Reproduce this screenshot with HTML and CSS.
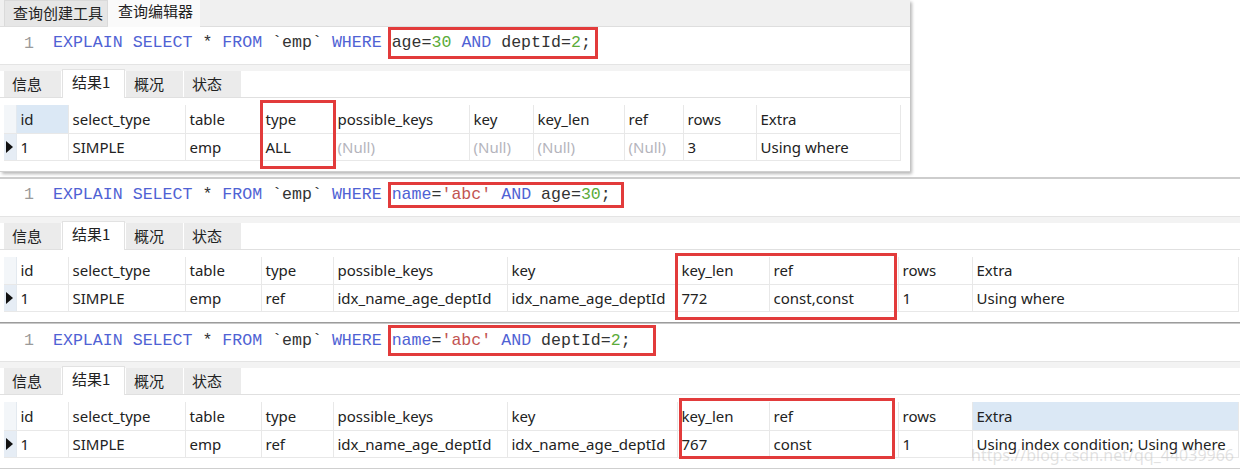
FILE: index.html
```html
<!DOCTYPE html>
<html lang="zh-CN">
<head>
<meta charset="utf-8">
<title>EXPLAIN</title>
<link rel="stylesheet" href="styles.css">
</head>
<body>
<div class="page">

  <section class="panel panel-first">
    <div class="doc-tabs">
      <span class="doc-tab">查询创建工具</span>
      <span class="doc-tab active">查询编辑器</span>
    </div>
    <div class="editor">
      <span class="ln">1</span>
      <code class="sql"><span class="kw">EXPLAIN</span> <span class="kw">SELECT</span> * <span class="kw">FROM</span> `emp` <span class="kw">WHERE</span> <span class="hl hl-1">age=<span class="num">30</span> <span class="kw">AND</span> deptId=<span class="num">2</span>;</span></code>
    </div>
    <div class="sep"></div>
    <div class="res-tabs">
      <span class="res-tab">信息</span>
      <span class="res-tab active">结果1</span>
      <span class="res-tab">概况</span>
      <span class="res-tab">状态</span>
    </div>
    <div class="grid-wrap">
      <table class="grid grid-narrow">
        <colgroup>
          <col class="c-ind"><col class="c-id"><col class="c-st"><col class="c-tb"><col class="c-ty">
          <col class="c-pk"><col class="c-k"><col class="c-kl"><col class="c-ref"><col class="c-rows"><col class="c-ex">
        </colgroup>
        <tr class="head">
          <th class="ind"></th><th class="sel">id</th><th>select_type</th><th>table</th><th>type</th>
          <th>possible_keys</th><th>key</th><th>key_len</th><th>ref</th><th>rows</th><th>Extra</th>
        </tr>
        <tr>
          <td class="ind"><span class="arrow"></span></td><td>1</td><td>SIMPLE</td><td>emp</td><td>ALL</td>
          <td class="null">(Null)</td><td class="null">(Null)</td><td class="null">(Null)</td><td class="null">(Null)</td><td>3</td><td>Using where</td>
        </tr>
      </table>
      <div class="mark mark-type"></div>
    </div>
  </section>

  <section class="panel panel-second">
    <div class="editor">
      <span class="ln">1</span>
      <code class="sql"><span class="kw">EXPLAIN</span> <span class="kw">SELECT</span> * <span class="kw">FROM</span> `emp` <span class="kw">WHERE</span> <span class="hl hl-2"><span class="kw">name</span>=<span class="str">'abc'</span> <span class="kw">AND</span> age=<span class="num">30</span>;</span></code>
    </div>
    <div class="sep"></div>
    <div class="res-tabs">
      <span class="res-tab">信息</span>
      <span class="res-tab active">结果1</span>
      <span class="res-tab">概况</span>
      <span class="res-tab">状态</span>
    </div>
    <div class="grid-wrap">
      <table class="grid grid-wide">
        <colgroup>
          <col class="c-ind"><col class="c-id"><col class="c-st"><col class="c-tb"><col class="c-ty">
          <col class="w-pk"><col class="w-k"><col class="w-kl"><col class="w-ref"><col class="w-rows"><col class="w-ex">
        </colgroup>
        <tr class="head">
          <th class="ind"></th><th>id</th><th>select_type</th><th>table</th><th>type</th>
          <th>possible_keys</th><th>key</th><th>key_len</th><th>ref</th><th>rows</th><th>Extra</th>
        </tr>
        <tr>
          <td class="ind"><span class="arrow"></span></td><td>1</td><td>SIMPLE</td><td>emp</td><td>ref</td>
          <td>idx_name_age_deptId</td><td>idx_name_age_deptId</td><td>772</td><td>const,const</td><td>1</td><td>Using where</td>
        </tr>
      </table>
      <div class="mark mark-keys-2"></div>
    </div>
  </section>

  <section class="panel panel-third">
    <div class="editor">
      <span class="ln">1</span>
      <code class="sql"><span class="kw">EXPLAIN</span> <span class="kw">SELECT</span> * <span class="kw">FROM</span> `emp` <span class="kw">WHERE</span> <span class="hl hl-3"><span class="kw">name</span>=<span class="str">'abc'</span> <span class="kw">AND</span> deptId=<span class="num">2</span>;</span></code>
    </div>
    <div class="sep"></div>
    <div class="res-tabs">
      <span class="res-tab">信息</span>
      <span class="res-tab active">结果1</span>
      <span class="res-tab">概况</span>
      <span class="res-tab">状态</span>
    </div>
    <div class="grid-wrap">
      <table class="grid grid-wide">
        <colgroup>
          <col class="c-ind"><col class="c-id"><col class="c-st"><col class="c-tb"><col class="c-ty">
          <col class="w-pk"><col class="w-k"><col class="w-kl"><col class="w-ref"><col class="w-rows"><col class="w-ex">
        </colgroup>
        <tr class="head">
          <th class="ind"></th><th>id</th><th>select_type</th><th>table</th><th>type</th>
          <th>possible_keys</th><th>key</th><th>key_len</th><th>ref</th><th>rows</th><th class="sel">Extra</th>
        </tr>
        <tr>
          <td class="ind"><span class="arrow"></span></td><td>1</td><td>SIMPLE</td><td>emp</td><td>ref</td>
          <td>idx_name_age_deptId</td><td>idx_name_age_deptId</td><td>767</td><td>const</td><td>1</td><td>Using index condition; Using where</td>
        </tr>
      </table>
      <div class="mark mark-keys-3"></div>
    </div>
    <div class="watermark">https://blog.csdn.net/qq_44039966</div>
  </section>

</div>
</body>
</html>
```

FILE: styles.css
```css
* { box-sizing: border-box; }

html, body {
  margin: 0;
  padding: 0;
  background: #ffffff;
}

body {
  font-family: "Noto Sans", "Noto Sans CJK SC", sans-serif;
  font-size: 15px;
  color: #222222;
  width: 1240px;
  height: 472px;
  overflow: hidden;
}

.page {
  display: flex;
  flex-direction: column;
  align-items: flex-start;
}

.panel {
  position: relative;
  background: #ffffff;
}

.panel-first {
  width: 910px;
  border-bottom: 1px solid #d0d0d0;
  box-shadow: 2px 2px 3px rgba(0, 0, 0, 0.28);
  z-index: 2;
}

.panel-second {
  width: 1240px;
  margin-top: 5px;
  border-top: 2px solid #cdcdcd;
  border-bottom: 1px solid #9c9c9c;
}

.panel-third {
  width: 1240px;
  border-top: 1px solid #c8c8c8;
  border-bottom: 1px solid #cfcfcf;
}

/* top document tabs */
.doc-tabs {
  height: 27px;
  background: #f0f0f0;
  border-bottom: 1px solid #dedede;
  display: flex;
  align-items: flex-end;
  padding-left: 4px;
}

.doc-tab {
  height: 26px;
  line-height: 24px;
  padding: 0 0 0 8px;
  font-family: "Noto Sans CJK SC", sans-serif;
  font-size: 15px;
  color: #222;
  white-space: nowrap;
}

.doc-tab:first-child {
  width: 104px;
  background: #e6e6e6;
  border: 1px solid #dadada;
  border-bottom: none;
}

.doc-tab.active {
  width: 92px;
  height: 27px;
  background: #fafafa;
  line-height: 21px;
  padding-left: 10px;
  margin-bottom: -1px;
}

/* sql editor */
.editor {
  height: 37px;
  padding-bottom: 5px;
  display: flex;
  align-items: center;
  background: #ffffff;
  font-family: "Liberation Mono", "Courier New", monospace;
  font-size: 16.6px;
  color: #333333;
  white-space: pre;
}

.ln {
  width: 34px;
  text-align: right;
  margin-right: 19px;
  color: #9a9a9a;
}

.sql {
  font-family: inherit;
  font-size: inherit;
  color: #333333;
}

.kw { color: #4f62d4; }
.num { color: #5bab3a; }
.str { color: #c25452; }

.hl {
  display: inline-block;
  border: 3px solid #e23b3b;
  margin-left: -4px;
  padding-left: 1px;
}

.hl-1 { line-height: 26px; padding-right: 4px; }
.hl-2 { line-height: 20px; padding-right: 10px; }
.hl-3 { line-height: 25px; padding-right: 22px; }

.sep {
  height: 7px;
  background: #f3f3f3;
  border-top: 1px solid #e4e4e4;
}

/* result tabs */
.res-tabs {
  height: 27px;
  display: flex;
  align-items: flex-end;
  gap: 1px;
  padding-left: 4px;
  background: #ffffff;
  border-bottom: 1px solid #e0e0e0;
}

.res-tab {
  width: 57px;
  height: 26px;
  line-height: 26px;
  padding-left: 8px;
  background: #ebebeb;
  font-family: "Noto Sans CJK SC", sans-serif;
  font-size: 15px;
  color: #222;
  white-space: nowrap;
}

.res-tab.active {
  width: 63px;
  height: 29px;
  line-height: 24px;
  padding-left: 9px;
  background: #ffffff;
  border: 1px solid #e2e2e2;
  border-bottom: none;
  margin-bottom: -1px;
}

/* grid */
.grid-wrap {
  position: relative;
  margin-top: 7px;
  padding-left: 4px;
  padding-bottom: 10px;
}

.grid {
  border-collapse: collapse;
  table-layout: fixed;
}

.grid-narrow { width: 896px; }
.grid-wide { width: 1234px; }

.c-ind { width: 12px; }
.c-id { width: 52px; }
.c-st { width: 117px; }
.c-tb { width: 76px; }
.c-ty { width: 72px; }
.c-pk { width: 136px; }
.c-k { width: 64px; }
.c-kl { width: 91px; }
.c-ref { width: 59px; }
.c-rows { width: 73px; }
.c-ex { width: 144px; }

.w-pk { width: 174px; }
.w-k { width: 170px; }
.w-kl { width: 92px; }
.w-ref { width: 129px; }
.w-rows { width: 74px; }
.w-ex { width: 266px; }

.grid th,
.grid td {
  padding: 0 0 0 4px;
  text-align: left;
  font-weight: normal;
  white-space: nowrap;
  overflow: hidden;
  border-right: 1px solid #e8e8e8;
  border-bottom: 1px solid #e8e8e8;
  color: #222222;
}

.grid th {
  height: 28px;
  line-height: 26px;
}

.grid td {
  height: 27px;
  line-height: 26px;
}

.grid .ind {
  padding: 0;
  background: #f3f6f9;
  border-right: 1px solid #e3e9ef;
}

.grid td.ind {
  background: #e6edf5;
}

.grid th.sel {
  background: #dbe8f5;
}

.grid td.null {
  color: #b4b4bc;
}

.arrow {
  display: block;
  width: 0;
  height: 0;
  margin-left: 2px;
  border-left: 7px solid #111111;
  border-top: 6px solid transparent;
  border-bottom: 6px solid transparent;
}

/* red annotation boxes over the grid */
.mark {
  position: absolute;
  border: 3px solid #e23b3b;
  pointer-events: none;
}

.mark-type { left: 260px; top: -5px; width: 76px; height: 69px; }
.mark-keys-2 { left: 675px; top: -4px; width: 222px; height: 67px; }
.mark-keys-3 { left: 679px; top: -4px; width: 216px; height: 61px; }

.watermark {
  position: absolute;
  right: 6px;
  bottom: 2px;
  font-family: "Noto Sans", sans-serif;
  font-size: 16px;
  color: rgba(170, 170, 170, 0.35);
  pointer-events: none;
}
```
